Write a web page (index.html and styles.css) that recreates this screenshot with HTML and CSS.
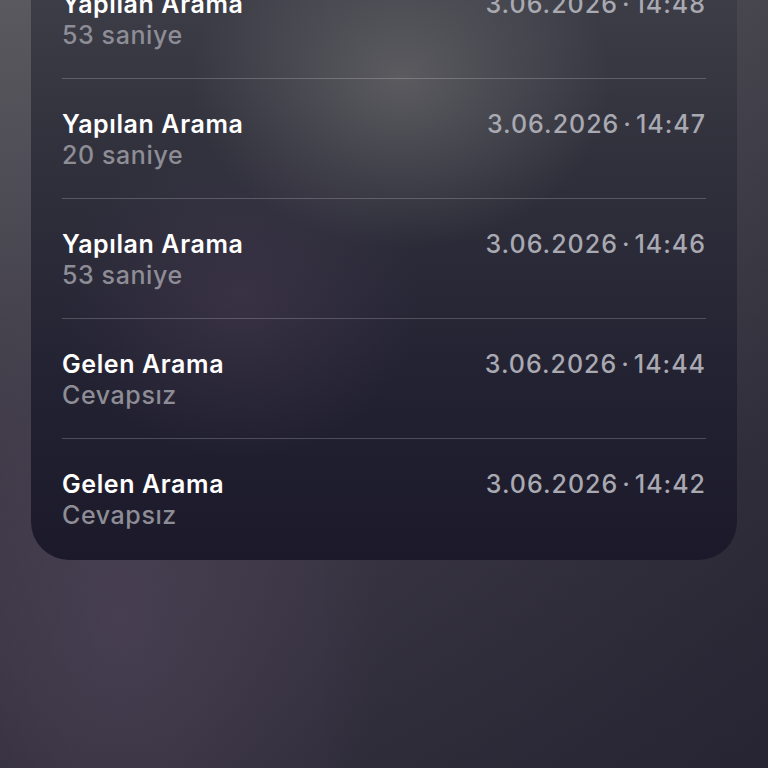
FILE: index.html
```html
<!DOCTYPE html>
<html lang="tr">
<head>
  <meta charset="UTF-8">
  <meta name="viewport" content="width=device-width, initial-scale=1.0">
  <title>Arama Geçmişi</title>
  <link rel="stylesheet" href="styles.css">
</head>
<body>
  <div class="card">
    <div class="call">
      <div class="info">
        <div class="title">Yapılan Arama</div>
        <div class="sub">53 saniye</div>
      </div>
      <div class="time">3.06.2026<span class="dot">·</span>14:48</div>
    </div>
    <div class="call">
      <div class="info">
        <div class="title">Yapılan Arama</div>
        <div class="sub">20 saniye</div>
      </div>
      <div class="time">3.06.2026<span class="dot">·</span>14:47</div>
    </div>
    <div class="call">
      <div class="info">
        <div class="title">Yapılan Arama</div>
        <div class="sub">53 saniye</div>
      </div>
      <div class="time">3.06.2026<span class="dot">·</span>14:46</div>
    </div>
    <div class="call">
      <div class="info">
        <div class="title">Gelen Arama</div>
        <div class="sub">Cevapsız</div>
      </div>
      <div class="time">3.06.2026<span class="dot">·</span>14:44</div>
    </div>
    <div class="call">
      <div class="info">
        <div class="title">Gelen Arama</div>
        <div class="sub">Cevapsız</div>
      </div>
      <div class="time">3.06.2026<span class="dot">·</span>14:42</div>
    </div>
  </div>
</body>
</html>
```

FILE: styles.css
```css
html, body {
  height: 100%;
}
body {
  margin: 0;
  overflow: hidden;
  font-family: Inter, "Noto Sans", sans-serif;
  color: #fff;
  background:
    radial-gradient(ellipse 260px 380px at 120px 620px, rgba(78, 68, 88, 0.7), transparent),
    linear-gradient(90deg, rgba(0, 0, 0, 0) 40%, rgba(10, 10, 25, 0.25) 100%),
    linear-gradient(180deg, #5a595f 0%, #4b4952 30%, #3c3845 60%, #302d3b 100%);
}
.card {
  margin: -42px 31px 0;
  padding: 0 31px 2px;
  border-radius: 0 0 38px 38px;
  background:
    radial-gradient(ellipse 210px 170px at 370px 120px, rgba(110, 110, 112, 0.65), transparent),
    radial-gradient(ellipse 180px 160px at 210px 340px, rgba(75, 62, 85, 0.45), transparent),
    linear-gradient(180deg, #3f4049 0%, #30303c 35%, #232232 70%, #1c1a2a 100%);
}
.call {
  display: flex;
  justify-content: space-between;
  padding: 30px 0 27px;
  border-top: 1px solid rgba(255, 255, 255, 0.2);
}
.call:first-child {
  border-top-color: transparent;
}
.title,
.sub,
.time {
  font-size: 25px;
  line-height: 31px;
  letter-spacing: 0.6px;
}
.title {
  font-weight: 600;
  color: #fff;
}
.sub {
  font-weight: 500;
  color: #8e8d96;
}
.time {
  font-weight: 500;
  color: #a9a9b2;
  letter-spacing: 1px;
}
.dot {
  margin: 0 4px;
}
```
